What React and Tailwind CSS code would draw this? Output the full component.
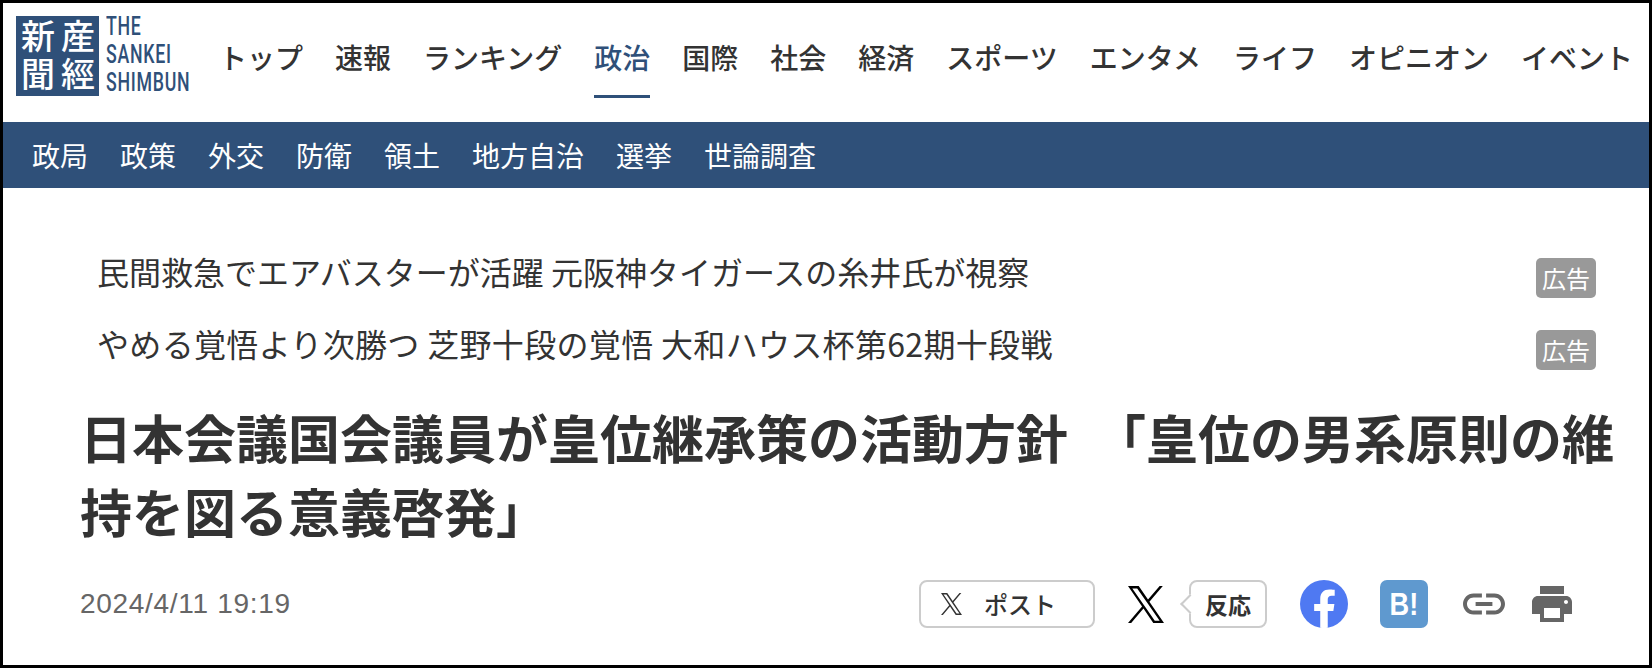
import React from "react";

const MAIN_NAV = ["トップ", "速報", "ランキング", "政治", "国際", "社会", "経済", "スポーツ", "エンタメ", "ライフ", "オピニオン", "イベント"];
const SUB_NAV = ["政局", "政策", "外交", "防衛", "領土", "地方自治", "選挙", "世論調査"];
const ADS = [
  { text: "民間救急でエアバスターが活躍 元阪神タイガースの糸井氏が視察", spacing: "" },
  { text: "やめる覚悟より次勝つ 芝野十段の覚悟 大和ハウス杯第62期十段戦", spacing: "tracking-[.33px]" },
];

const X_PATH = "M714.163 519.284L1160.89 0H1055.03L667.137 450.887L357.328 0H0L468.492 681.821L0 1226.37H105.866L515.491 750.218L842.672 1226.37H1200L714.137 519.284H714.163ZM569.165 687.828L521.697 619.934L144.011 79.6944H306.615L611.412 515.685L658.88 583.579L1055.08 1150.3H892.476L569.165 687.854V687.828Z";

function XIcon({ className }) {
  return (
    <svg viewBox="0 0 1200 1227" preserveAspectRatio="none" className={className} fill="currentColor">
      <path d={X_PATH} />
    </svg>
  );
}

function Logo() {
  return (
    <div className="flex items-start gap-[7px] mt-[-2px]">
      <div className="w-[83px] h-[80px] bg-[#2f5079] text-white flex flex-row-reverse justify-center gap-[2px] pt-[3px] text-[34px] leading-[38px] tracking-[4px] font-medium">
        <span className="[writing-mode:vertical-rl]">産經</span>
        <span className="[writing-mode:vertical-rl]">新聞</span>
      </div>
      <div className="text-[#2f5079] text-[25px] leading-[28px] tracking-[1px] font-medium font-['Roboto',sans-serif] w-[85px] mt-[-3px]">
        <div className="origin-left scale-x-[.71] whitespace-nowrap">THE</div>
        <div className="origin-left scale-x-[.71] whitespace-nowrap">SANKEI</div>
        <div className="origin-left scale-x-[.71] whitespace-nowrap">SHIMBUN</div>
      </div>
    </div>
  );
}

function ShareBar() {
  return (
    <div className="flex items-center h-[48px] mr-[77px]">
      <button className="w-[176px] h-[48px] border-2 border-[#cccccc] rounded-[8px] flex items-center text-[#333] text-[24px] font-medium pl-[20px]">
        <XIcon className="w-[21px] h-[22px]" />
        <span className="ml-[22px]">ポスト</span>
      </button>
      <XIcon className="w-[36px] h-[37px] ml-[33px] text-black" />
      <div className="relative ml-[25px] w-[78px] h-[48px] border-2 border-[#cccccc] rounded-[8px] flex items-center justify-center text-[#333] text-[23px] font-bold">
        {/* balloon tail */}
        <span className="absolute left-[-8px] top-[15px] w-[14px] h-[14px] bg-white border-l-2 border-b-2 border-[#cccccc] rotate-45" />
        <span className="relative">反応</span>
      </div>
      <svg viewBox="0 0 24 24" className="w-[48px] h-[48px] ml-[33px]">
        <circle cx="12" cy="12" r="12" fill="#4f79f2" />
        <path fill="#fff" d="M16.67 15.47 17.2 12h-3.33V9.75c0-.95.47-1.87 1.96-1.87h1.52V4.92s-1.38-.23-2.69-.23c-2.74 0-4.54 1.66-4.54 4.67V12H7.08v3.47h3.04v8.38c.61.1 1.23.15 1.87.15s1.27-.05 1.88-.15v-8.38z" />
      </svg>
      <div className="w-[48px] h-[48px] ml-[32px] rounded-[7px] bg-[#5f99cf] flex items-center justify-center text-white text-[32px] font-bold font-['Liberation_Sans',sans-serif]">
        <span className="scale-x-[.85]">B!</span>
      </div>
      <svg viewBox="2 7 20 10" className="w-[42px] h-[22px] ml-[35px] text-[#666]" fill="currentColor">
        <path d="M3.9 12c0-1.71 1.39-3.1 3.1-3.1h4V7H7c-2.76 0-5 2.24-5 5s2.24 5 5 5h4v-1.9H7c-1.71 0-3.1-1.39-3.1-3.1zM8 13h8v-2H8v2zm9-6h-4v1.9h4c1.71 0 3.1 1.39 3.1 3.1s-1.39 3.1-3.1 3.1h-4V17h4c2.76 0 5-2.24 5-5s-2.24-5-5-5z" />
      </svg>
      <svg viewBox="2 3 20 18" className="w-[40px] h-[36px] ml-[27px] text-[#666]" fill="currentColor">
        <path d="M19 8H5c-1.66 0-3 1.34-3 3v6h4v4h12v-4h4v-6c0-1.66-1.34-3-3-3zm-3 11H8v-5h8v5zm3-7c-.55 0-1-.45-1-1s.45-1 1-1 1 .45 1 1-.45 1-1 1zm-1-9H6v4h12V3z" />
      </svg>
    </div>
  );
}

export default function App() {
  return (
    <div className="w-[1652px] h-[668px] border-[3px] border-black bg-white overflow-hidden font-['Noto_Sans_CJK_JP','Liberation_Sans',sans-serif]">
      {/* Main nav */}
      <nav className="h-[119px] flex items-start pl-[13px] pt-[15px]">
        <Logo />
        <ul className="flex gap-[32px] ml-[28px] text-[28px] font-medium text-[#333] leading-[38px]">
          {MAIN_NAV.map((item) => (
            <li
              key={item}
              className={item === "政治" ? "h-[80px] pt-[20px] whitespace-nowrap text-[#2f5079] border-b-[3px] border-[#2f5079]" : "h-[80px] pt-[20px] whitespace-nowrap"}
            >
              {item}
            </li>
          ))}
        </ul>
      </nav>

      {/* Sub nav */}
      <ul className="h-[66px] bg-[#2f5079] flex items-center gap-[32px] pl-[29px] text-white text-[28px]">
        {SUB_NAV.map((item) => (
          <li key={item}>{item}</li>
        ))}
      </ul>

      {/* Ads */}
      <div className="pt-[70px] pl-[94px] pr-[53px] flex flex-col gap-[32px]">
        {ADS.map((ad) => (
          <div key={ad.text} className="h-[40px] flex items-start justify-between">
            <span className={"text-[#333] text-[32px] leading-[40px] mt-[-7px] " + ad.spacing}>{ad.text}</span>
            <span className="w-[60px] h-[40px] bg-[#999999] rounded-[5px] text-white text-[24px] flex items-center justify-center">広告</span>
          </div>
        ))}
      </div>

      {/* Headline */}
      <h1 className="mt-[30px] ml-[77px] mr-[28px] text-[#333] text-[52px] leading-[74px] font-bold">
        日本会議国会議員が皇位継承策の活動方針　「皇位の男系原則の維持を図る意義啓発」
      </h1>

      {/* Meta row */}
      <div className="mt-[32px] pl-[77px] flex items-center justify-between">
        <time className="text-[#666] text-[28px] tracking-[.7px] font-['Liberation_Sans',sans-serif]">2024/4/11 19:19</time>
        <ShareBar />
      </div>
    </div>
  );
}
